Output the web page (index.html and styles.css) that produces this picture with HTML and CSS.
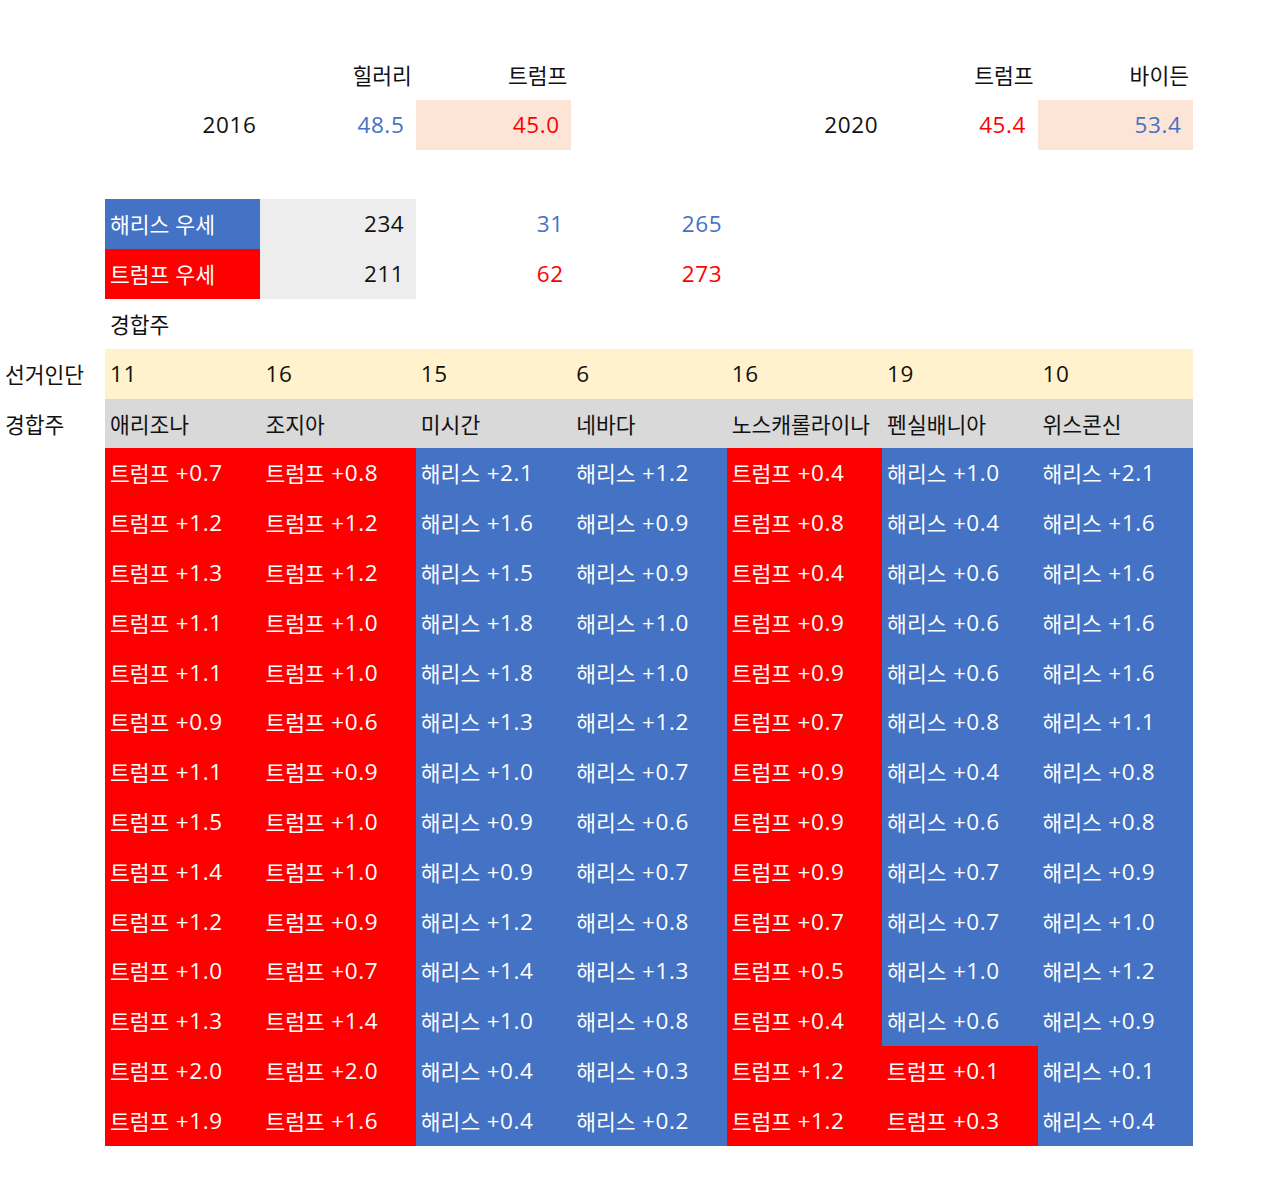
FILE: index.html
```html
<!DOCTYPE html>
<html lang="ko">
<head>
<meta charset="utf-8">
<link rel="stylesheet" href="styles.css">
</head>
<body>
<div class="sheet">
  <!-- row 1 -->
  <div></div><div></div>
  <div class="c r"><span class="k">힐러리</span></div>
  <div class="c r"><span class="k">트럼프</span></div>
  <div></div><div></div>
  <div class="c r"><span class="k">트럼프</span></div>
  <div class="c r"><span class="k">바이든</span></div>
  <!-- row 2 -->
  <div></div>
  <div class="c r">2016</div>
  <div class="c rn tb">48.5</div>
  <div class="c rn tr peach">45.0</div>
  <div></div>
  <div class="c r">2020</div>
  <div class="c rn tr">45.4</div>
  <div class="c rn tb peach">53.4</div>
  <!-- row 3 -->
  <div class="blank"></div>
  <!-- row 4 -->
  <div></div>
  <div class="c l bb"><span class="k">해리스 우세</span></div>
  <div class="c rn grey">234</div>
  <div class="c rm tb">31</div>
  <div class="c rs tb">265</div>
  <div></div><div></div><div></div>
  <!-- row 5 -->
  <div></div>
  <div class="c l br"><span class="k">트럼프 우세</span></div>
  <div class="c rn grey">211</div>
  <div class="c rm tr">62</div>
  <div class="c rs tr">273</div>
  <div></div><div></div><div></div>
  <!-- row 6 -->
  <div></div>
  <div class="c l"><span class="k">경합주</span></div>
  <div></div><div></div><div></div><div></div><div></div><div></div>
  <!-- row 7 -->
  <div class="c h"><span class="k">선거인단</span></div>
  <div class="c l yel">11</div>
  <div class="c l yel">16</div>
  <div class="c l yel">15</div>
  <div class="c l yel">6</div>
  <div class="c l yel">16</div>
  <div class="c l yel">19</div>
  <div class="c l yel">10</div>
  <!-- row 8 -->
  <div class="c h"><span class="k">경합주</span></div>
  <div class="c l hd"><span class="k">애리조나</span></div>
  <div class="c l hd"><span class="k">조지아</span></div>
  <div class="c l hd"><span class="k">미시간</span></div>
  <div class="c l hd"><span class="k">네바다</span></div>
  <div class="c l hd"><span class="k">노스캐롤라이나</span></div>
  <div class="c l hd"><span class="k">펜실배니아</span></div>
  <div class="c l hd"><span class="k">위스콘신</span></div>

  <div></div>
  <div class="c l br"><span class="k">트럼프</span> +0.7</div>
  <div class="c l br"><span class="k">트럼프</span> +0.8</div>
  <div class="c l bb"><span class="k">해리스</span> +2.1</div>
  <div class="c l bb"><span class="k">해리스</span> +1.2</div>
  <div class="c l br"><span class="k">트럼프</span> +0.4</div>
  <div class="c l bb"><span class="k">해리스</span> +1.0</div>
  <div class="c l bb"><span class="k">해리스</span> +2.1</div>

  <div></div>
  <div class="c l br"><span class="k">트럼프</span> +1.2</div>
  <div class="c l br"><span class="k">트럼프</span> +1.2</div>
  <div class="c l bb"><span class="k">해리스</span> +1.6</div>
  <div class="c l bb"><span class="k">해리스</span> +0.9</div>
  <div class="c l br"><span class="k">트럼프</span> +0.8</div>
  <div class="c l bb"><span class="k">해리스</span> +0.4</div>
  <div class="c l bb"><span class="k">해리스</span> +1.6</div>

  <div></div>
  <div class="c l br"><span class="k">트럼프</span> +1.3</div>
  <div class="c l br"><span class="k">트럼프</span> +1.2</div>
  <div class="c l bb"><span class="k">해리스</span> +1.5</div>
  <div class="c l bb"><span class="k">해리스</span> +0.9</div>
  <div class="c l br"><span class="k">트럼프</span> +0.4</div>
  <div class="c l bb"><span class="k">해리스</span> +0.6</div>
  <div class="c l bb"><span class="k">해리스</span> +1.6</div>

  <div></div>
  <div class="c l br"><span class="k">트럼프</span> +1.1</div>
  <div class="c l br"><span class="k">트럼프</span> +1.0</div>
  <div class="c l bb"><span class="k">해리스</span> +1.8</div>
  <div class="c l bb"><span class="k">해리스</span> +1.0</div>
  <div class="c l br"><span class="k">트럼프</span> +0.9</div>
  <div class="c l bb"><span class="k">해리스</span> +0.6</div>
  <div class="c l bb"><span class="k">해리스</span> +1.6</div>

  <div></div>
  <div class="c l br"><span class="k">트럼프</span> +1.1</div>
  <div class="c l br"><span class="k">트럼프</span> +1.0</div>
  <div class="c l bb"><span class="k">해리스</span> +1.8</div>
  <div class="c l bb"><span class="k">해리스</span> +1.0</div>
  <div class="c l br"><span class="k">트럼프</span> +0.9</div>
  <div class="c l bb"><span class="k">해리스</span> +0.6</div>
  <div class="c l bb"><span class="k">해리스</span> +1.6</div>

  <div></div>
  <div class="c l br"><span class="k">트럼프</span> +0.9</div>
  <div class="c l br"><span class="k">트럼프</span> +0.6</div>
  <div class="c l bb"><span class="k">해리스</span> +1.3</div>
  <div class="c l bb"><span class="k">해리스</span> +1.2</div>
  <div class="c l br"><span class="k">트럼프</span> +0.7</div>
  <div class="c l bb"><span class="k">해리스</span> +0.8</div>
  <div class="c l bb"><span class="k">해리스</span> +1.1</div>

  <div></div>
  <div class="c l br"><span class="k">트럼프</span> +1.1</div>
  <div class="c l br"><span class="k">트럼프</span> +0.9</div>
  <div class="c l bb"><span class="k">해리스</span> +1.0</div>
  <div class="c l bb"><span class="k">해리스</span> +0.7</div>
  <div class="c l br"><span class="k">트럼프</span> +0.9</div>
  <div class="c l bb"><span class="k">해리스</span> +0.4</div>
  <div class="c l bb"><span class="k">해리스</span> +0.8</div>

  <div></div>
  <div class="c l br"><span class="k">트럼프</span> +1.5</div>
  <div class="c l br"><span class="k">트럼프</span> +1.0</div>
  <div class="c l bb"><span class="k">해리스</span> +0.9</div>
  <div class="c l bb"><span class="k">해리스</span> +0.6</div>
  <div class="c l br"><span class="k">트럼프</span> +0.9</div>
  <div class="c l bb"><span class="k">해리스</span> +0.6</div>
  <div class="c l bb"><span class="k">해리스</span> +0.8</div>

  <div></div>
  <div class="c l br"><span class="k">트럼프</span> +1.4</div>
  <div class="c l br"><span class="k">트럼프</span> +1.0</div>
  <div class="c l bb"><span class="k">해리스</span> +0.9</div>
  <div class="c l bb"><span class="k">해리스</span> +0.7</div>
  <div class="c l br"><span class="k">트럼프</span> +0.9</div>
  <div class="c l bb"><span class="k">해리스</span> +0.7</div>
  <div class="c l bb"><span class="k">해리스</span> +0.9</div>

  <div></div>
  <div class="c l br"><span class="k">트럼프</span> +1.2</div>
  <div class="c l br"><span class="k">트럼프</span> +0.9</div>
  <div class="c l bb"><span class="k">해리스</span> +1.2</div>
  <div class="c l bb"><span class="k">해리스</span> +0.8</div>
  <div class="c l br"><span class="k">트럼프</span> +0.7</div>
  <div class="c l bb"><span class="k">해리스</span> +0.7</div>
  <div class="c l bb"><span class="k">해리스</span> +1.0</div>

  <div></div>
  <div class="c l br"><span class="k">트럼프</span> +1.0</div>
  <div class="c l br"><span class="k">트럼프</span> +0.7</div>
  <div class="c l bb"><span class="k">해리스</span> +1.4</div>
  <div class="c l bb"><span class="k">해리스</span> +1.3</div>
  <div class="c l br"><span class="k">트럼프</span> +0.5</div>
  <div class="c l bb"><span class="k">해리스</span> +1.0</div>
  <div class="c l bb"><span class="k">해리스</span> +1.2</div>

  <div></div>
  <div class="c l br"><span class="k">트럼프</span> +1.3</div>
  <div class="c l br"><span class="k">트럼프</span> +1.4</div>
  <div class="c l bb"><span class="k">해리스</span> +1.0</div>
  <div class="c l bb"><span class="k">해리스</span> +0.8</div>
  <div class="c l br"><span class="k">트럼프</span> +0.4</div>
  <div class="c l bb"><span class="k">해리스</span> +0.6</div>
  <div class="c l bb"><span class="k">해리스</span> +0.9</div>

  <div></div>
  <div class="c l br"><span class="k">트럼프</span> +2.0</div>
  <div class="c l br"><span class="k">트럼프</span> +2.0</div>
  <div class="c l bb"><span class="k">해리스</span> +0.4</div>
  <div class="c l bb"><span class="k">해리스</span> +0.3</div>
  <div class="c l br"><span class="k">트럼프</span> +1.2</div>
  <div class="c l br"><span class="k">트럼프</span> +0.1</div>
  <div class="c l bb"><span class="k">해리스</span> +0.1</div>

  <div></div>
  <div class="c l br"><span class="k">트럼프</span> +1.9</div>
  <div class="c l br"><span class="k">트럼프</span> +1.6</div>
  <div class="c l bb"><span class="k">해리스</span> +0.4</div>
  <div class="c l bb"><span class="k">해리스</span> +0.2</div>
  <div class="c l br"><span class="k">트럼프</span> +1.2</div>
  <div class="c l br"><span class="k">트럼프</span> +0.3</div>
  <div class="c l bb"><span class="k">해리스</span> +0.4</div>
</div>
</body>
</html>
```

FILE: styles.css
```css
html, body {
  margin: 0;
  padding: 0;
  background: #ffffff;
}
body {
  font-family: "Open Sans", "Noto Sans CJK KR", sans-serif;
  font-size: 22.5px;
  letter-spacing: 0.6px;
  color: #111111;
}
.sheet {
  display: grid;
  grid-template-columns: 105px repeat(7, 155.43px);
  grid-auto-rows: 49.8px;
  padding-top: 50px;
  width: 1193px;
}
.blank {
  grid-column: 1 / -1;
}
.c {
  display: block;
  line-height: 49.8px;
  white-space: nowrap;
  overflow: visible;
}
.k {
  font-family: "Noto Sans CJK KR", sans-serif;
  font-size: 21.5px;
  letter-spacing: 0;
  vertical-align: top;
  display: inline-block;
  line-height: 49.8px;
}
.l { text-align: left; padding-left: 5px; }
.h { text-align: left; padding-left: 5px; }
.r { text-align: right; padding-right: 4px; }
.rn { text-align: right; padding-right: 11.5px; }
.rm { text-align: right; padding-right: 7.5px; }
.rs { text-align: right; padding-right: 4.5px; }
.tb { color: #4472c4; }
.tr { color: #ff0000; }
.peach { background: #fce4d6; }
.grey { background: #ededed; }
.yel { background: #fff2cc; }
.hd { background: #d9d9d9; }
.bb { background: #4472c4; color: #ffffff; }
.br { background: #ff0000; color: #ffffff; }
```
